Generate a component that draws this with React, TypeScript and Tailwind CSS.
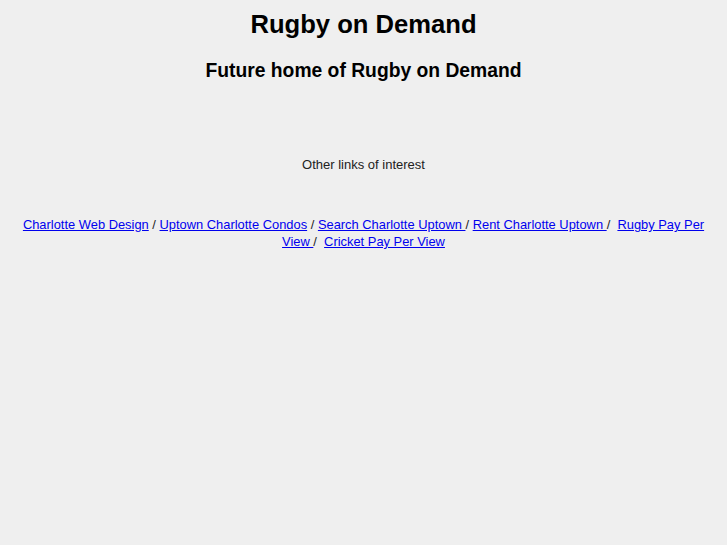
import React from 'react';

const links = [
  { label: 'Charlotte Web Design', sep: ' / ' },
  { label: 'Uptown Charlotte Condos', sep: ' / ' },
  { label: 'Search Charlotte Uptown ', sep: '/ ' },
  { label: 'Rent Charlotte Uptown ', sep: '/\u00a0 ' },
  { label: 'Rugby Pay Per View ', sep: '/\u00a0 ' },
  { label: 'Cricket Pay Per View', sep: '' },
];

export default function App() {
  return (
    <div className="min-h-[545px] bg-[#efefef] px-2 text-center text-black [font-family:'Liberation_Sans',Arial,sans-serif]">
      <h1 className="pt-[10px] text-[25.6px] font-bold leading-[29px]">Rugby on Demand</h1>
      <h2 className="mt-[21px] text-[19.3px] font-bold leading-[22px]">Future home of Rugby on Demand</h2>
      <p className="mt-[74px] text-[13px] leading-[17px] text-[#222]">Other links of interest</p>
      <p className="mt-[43px] text-[12.9px] leading-[17px] text-[#222]">
        {links.map((l) => (
          <React.Fragment key={l.label}>
            <a href="#" className="text-[#0000ee] underline">
              {l.label}
            </a>
            {l.sep}
          </React.Fragment>
        ))}
      </p>
    </div>
  );
}
